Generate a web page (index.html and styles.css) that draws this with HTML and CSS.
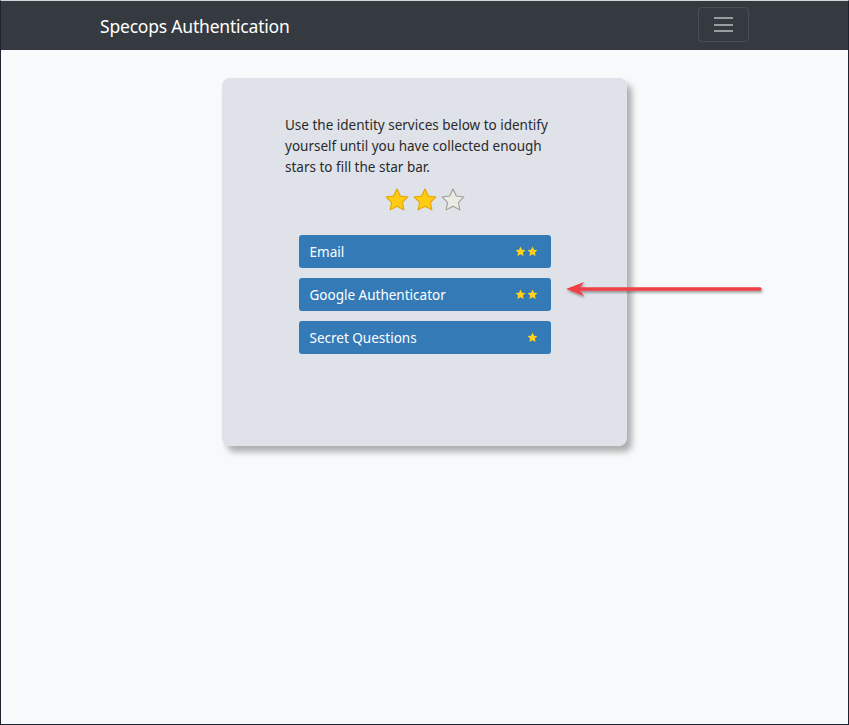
FILE: index.html
```html
<!DOCTYPE html>
<html lang="en">
<head>
    <meta charset="UTF-8">
    <meta name="viewport" content="width=device-width, initial-scale=1.0">
    <title>Specops Authentication</title>
    <link rel="stylesheet" href="styles.css">
</head>
<body>
    <nav class="navbar">
        <div class="navbar-inner">
            <span class="brand">Specops Authentication</span>
            <button class="toggler" aria-label="Menu">
                <span class="bar"></span>
                <span class="bar"></span>
                <span class="bar"></span>
            </button>
        </div>
    </nav>

    <main class="content">
        <div class="card">
            <p class="intro">Use the identity services below to identify yourself until you have collected enough stars to fill the star bar.</p>

            <div class="star-bar">
                <svg class="star full" viewBox="0 0 24 24"><path d="M12 1.8l3.1 6.5 7 .9-5.1 4.9 1.3 7-6.3-3.4-6.3 3.4 1.3-7-5.1-4.9 7-.9z"/></svg>
                <svg class="star full" viewBox="0 0 24 24"><path d="M12 1.8l3.1 6.5 7 .9-5.1 4.9 1.3 7-6.3-3.4-6.3 3.4 1.3-7-5.1-4.9 7-.9z"/></svg>
                <svg class="star empty" viewBox="0 0 24 24"><path d="M12 1.8l3.1 6.5 7 .9-5.1 4.9 1.3 7-6.3-3.4-6.3 3.4 1.3-7-5.1-4.9 7-.9z"/></svg>
            </div>

            <div class="services">
                <button class="service">Email
                    <span class="stars">
                        <svg viewBox="0 0 24 24"><path d="M12 1l3.3 7 7.5.9-5.5 5.2 1.4 7.5L12 18l-6.7 3.6 1.4-7.5L1.2 8.9l7.5-.9z"/></svg>
                        <svg viewBox="0 0 24 24"><path d="M12 1l3.3 7 7.5.9-5.5 5.2 1.4 7.5L12 18l-6.7 3.6 1.4-7.5L1.2 8.9l7.5-.9z"/></svg>
                    </span>
                </button>
                <button class="service">Google Authenticator
                    <span class="stars">
                        <svg viewBox="0 0 24 24"><path d="M12 1l3.3 7 7.5.9-5.5 5.2 1.4 7.5L12 18l-6.7 3.6 1.4-7.5L1.2 8.9l7.5-.9z"/></svg>
                        <svg viewBox="0 0 24 24"><path d="M12 1l3.3 7 7.5.9-5.5 5.2 1.4 7.5L12 18l-6.7 3.6 1.4-7.5L1.2 8.9l7.5-.9z"/></svg>
                    </span>
                </button>
                <button class="service">Secret Questions
                    <span class="stars">
                        <svg viewBox="0 0 24 24"><path d="M12 1l3.3 7 7.5.9-5.5 5.2 1.4 7.5L12 18l-6.7 3.6 1.4-7.5L1.2 8.9l7.5-.9z"/></svg>
                    </span>
                </button>
            </div>
        </div>
    </main>

    <!-- callout arrow pointing at Google Authenticator -->
    <svg class="callout" width="210" height="24" viewBox="0 0 210 24">
        <defs>
            <filter id="shade" x="-10%" y="-50%" width="120%" height="200%">
                <feDropShadow dx="1" dy="2" stdDeviation="1.2" flood-color="#000" flood-opacity="0.35"/>
            </filter>
        </defs>
        <g filter="url(#shade)">
            <line x1="14" y1="10" x2="196" y2="10" stroke="#ef3f45" stroke-width="3.5" stroke-linecap="round"/>
            <path d="M2 10 L20 3 L15 10 L20 17 Z" fill="#ef3f45"/>
        </g>
    </svg>
</body>
</html>
```

FILE: styles.css
```css
* {
    box-sizing: border-box;
}

html, body {
    height: 100%;
}

body {
    margin: 0;
    font-family: 'Noto Sans', 'Open Sans', sans-serif;
    background: #f8f9fa;
    color: #212529;
    border: 1px solid #1c2430;
    border-top-color: #d4d6d8;
    position: relative;
}

.navbar {
    background: #343a40;
    height: 49px;
}

.navbar-inner {
    height: 100%;
    padding: 0 99px;
    display: flex;
    align-items: center;
    justify-content: space-between;
}

.brand {
    color: #fff;
    font-size: 17.5px;
    letter-spacing: -0.2px;
    margin-top: 1px;
}

.toggler {
    width: 51px;
    height: 35px;
    background: transparent;
    border: 1px solid rgba(255, 255, 255, 0.1);
    border-radius: 4px;
    display: flex;
    flex-direction: column;
    align-items: center;
    justify-content: center;
    gap: 4.5px;
    padding: 0;
    margin-top: -2px;
}

.toggler .bar {
    display: block;
    width: 19px;
    height: 2px;
    background: rgba(255, 255, 255, 0.5);
}

.content {
    padding-top: 28px;
    display: flex;
    justify-content: center;
}

.card {
    width: 405px;
    height: 368px;
    background: #dfe2e9;
    border-radius: 8px;
    box-shadow: 5px 6px 6px rgba(0, 0, 0, 0.3);
    padding: 37px 63px 0;
}

.intro {
    margin: 0;
    font-size: 13.5px;
    line-height: 21px;
    color: #2a2a2a;
}

.star-bar {
    display: flex;
    justify-content: center;
    gap: 2px;
    margin-top: 9px;
}

.star {
    width: 26px;
    height: 26px;
}

.star path {
    stroke-width: 1;
    stroke-linejoin: round;
}

.star.full path {
    fill: #ffcb13;
    stroke: #e3a400;
}

.star.empty path {
    fill: #ebebe6;
    stroke: #9e9d96;
}

.services {
    width: 252px;
    margin: 22px auto 0;
    display: flex;
    flex-direction: column;
    gap: 10px;
}

.service {
    height: 33px;
    background: #337ab7;
    border: none;
    border-radius: 3px;
    color: #fff;
    font-family: inherit;
    font-size: 13.5px;
    text-align: left;
    padding: 0 13px 0 11px;
    display: flex;
    align-items: center;
    justify-content: space-between;
}

.service .stars {
    display: flex;
    gap: 1px;
}

.service .stars svg {
    width: 11px;
    height: 11px;
    fill: #ffd21c;
}

.callout {
    position: absolute;
    left: 563px;
    top: 278px;
}
```
